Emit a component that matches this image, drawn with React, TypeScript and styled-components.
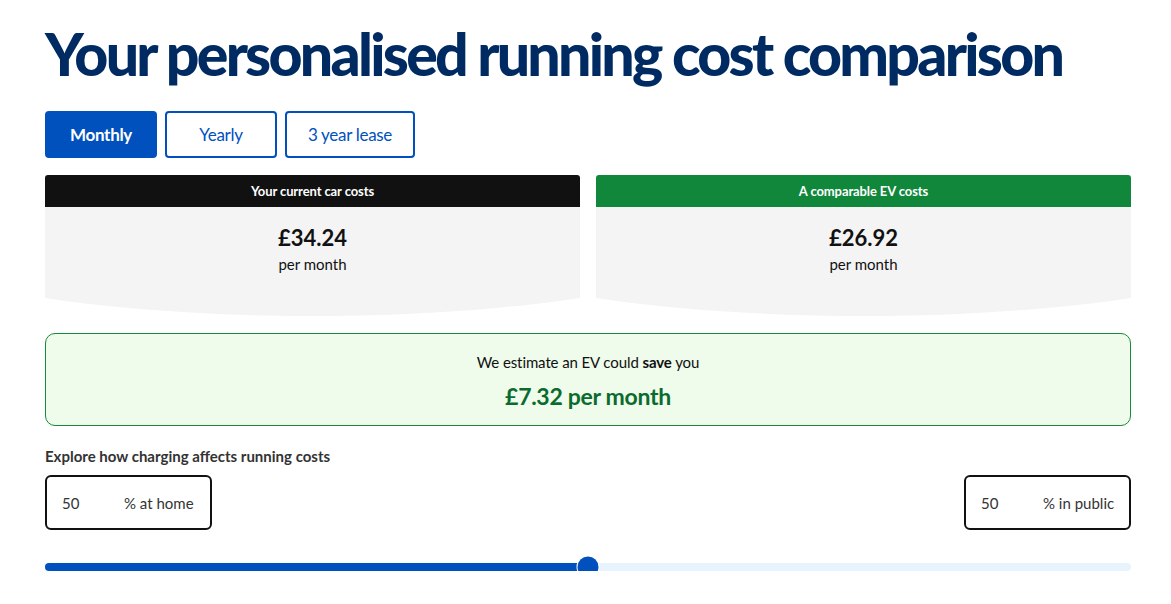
import { useState } from "react";
import styled, { createGlobalStyle } from "styled-components";

const GlobalStyle = createGlobalStyle`
  body {
    margin: 0;
    background: #fff;
    font-family: Lato, "Open Sans", sans-serif;
    color: #111;
  }
`;

const Page = styled.main`
  width: 1086px;
  padding: 18px 0 0 45px;
`;

const Title = styled.h1`
  margin: 0;
  font-size: 59px;
  font-weight: 900;
  line-height: 72px;
  letter-spacing: -2.75px;
  color: #002b62;
  white-space: nowrap;
`;

const PeriodTabs = styled.div`
  display: flex;
  gap: 8px;
  margin-top: 21px;
`;

const PeriodButton = styled.button<{ $active?: boolean; $width: number }>`
  width: ${(p) => p.$width}px;
  height: 47px;
  border: 2px solid #0050bd;
  border-radius: 4px;
  background: ${(p) => (p.$active ? "#0050bd" : "#fff")};
  color: ${(p) => (p.$active ? "#fff" : "#0050bd")};
  font-family: Lato, sans-serif;
  font-size: 17px;
  font-weight: ${(p) => (p.$active ? 700 : 400)};
  letter-spacing: -0.3px;
  cursor: pointer;
`;

const CostGrid = styled.div`
  display: grid;
  grid-template-columns: 1fr 1fr;
  gap: 16px;
  margin-top: 17px;
`;

const CostCard = styled.section``;

const CardHeader = styled.div<{ $tone: "dark" | "green" }>`
  height: 32px;
  display: flex;
  align-items: center;
  justify-content: center;
  border-radius: 3px 3px 0 0;
  background: ${(p) => (p.$tone === "green" ? "#10873b" : "#111")};
  color: #fff;
  font-size: 13px;
  font-weight: 700;
  letter-spacing: -0.1px;
`;

// bottom edge bows outward in a shallow arc
const CardBody = styled.div`
  height: 109px;
  padding-top: 16px;
  box-sizing: border-box;
  background: #f4f4f4;
  text-align: center;
  clip-path: ellipse(486px 109px at 50% 0);
`;

const Price = styled.div`
  font-size: 22px;
  font-weight: 700;
  line-height: 30px;
`;

const PriceUnit = styled.div`
  font-size: 15px;
  line-height: 22px;
`;

const SavingsBox = styled.div`
  margin-top: 17px;
  height: 93px;
  box-sizing: border-box;
  padding-top: 17px;
  border: 1px solid #188a3c;
  border-radius: 10px;
  background: #effbeb;
  text-align: center;
`;

const SavingsLead = styled.p`
  margin: 0;
  font-size: 15px;
  line-height: 22px;
  letter-spacing: -0.1px;

  strong {
    font-weight: 700;
  }
`;

const SavingsAmount = styled.p`
  margin: 8px 0 0;
  font-size: 23px;
  font-weight: 700;
  line-height: 30px;
  letter-spacing: -0.3px;
  color: #0b6b2e;
`;

const ExploreLabel = styled.p`
  margin: 20px 0 0;
  font-size: 15px;
  font-weight: 700;
  line-height: 20px;
  color: #333;
`;

const SplitRow = styled.div`
  display: flex;
  justify-content: space-between;
  margin-top: 9px;
`;

const SplitInput = styled.label`
  width: 167px;
  height: 55px;
  box-sizing: border-box;
  display: flex;
  align-items: center;
  padding-left: 15px;
  border: 2px solid #111;
  border-radius: 6px;
  font-size: 15px;
  color: #333;
`;

const SplitValue = styled.span`
  width: 62px;
`;

const Slider = styled.div`
  position: relative;
  margin-top: 33px;
  height: 8px;
  border-radius: 4px;
  background: #e8f4fd;
`;

const SliderFill = styled.div`
  height: 100%;
  border-radius: 4px;
  background: #0050bd;
`;

const SliderThumb = styled.div`
  position: absolute;
  top: 50%;
  width: 21px;
  height: 21px;
  border-radius: 50%;
  background: #0050bd;
  box-shadow: 0 0 0 1px #fff;
  transform: translate(-50%, -50%);
`;

const periods = [
  { label: "Monthly", width: 112 },
  { label: "Yearly", width: 112 },
  { label: "3 year lease", width: 130 },
];

export default function App() {
  const [period, setPeriod] = useState("Monthly");
  const home = 50;

  return (
    <Page>
      <GlobalStyle />
      <Title>Your personalised running cost comparison</Title>

      <PeriodTabs>
        {periods.map((p) => (
          <PeriodButton
            key={p.label}
            $width={p.width}
            $active={period === p.label}
            onClick={() => setPeriod(p.label)}
          >
            {p.label}
          </PeriodButton>
        ))}
      </PeriodTabs>

      <CostGrid>
        <CostCard>
          <CardHeader $tone="dark">Your current car costs</CardHeader>
          <CardBody>
            <Price>£34.24</Price>
            <PriceUnit>per month</PriceUnit>
          </CardBody>
        </CostCard>
        <CostCard>
          <CardHeader $tone="green">A comparable EV costs</CardHeader>
          <CardBody>
            <Price>£26.92</Price>
            <PriceUnit>per month</PriceUnit>
          </CardBody>
        </CostCard>
      </CostGrid>

      <SavingsBox>
        <SavingsLead>
          We estimate an EV could <strong>save</strong> you
        </SavingsLead>
        <SavingsAmount>£7.32 per month</SavingsAmount>
      </SavingsBox>

      <ExploreLabel>Explore how charging affects running costs</ExploreLabel>
      <SplitRow>
        <SplitInput>
          <SplitValue>{home}</SplitValue>% at home
        </SplitInput>
        <SplitInput>
          <SplitValue>{100 - home}</SplitValue>% in public
        </SplitInput>
      </SplitRow>

      <Slider>
        <SliderFill style={{ width: `${home}%` }} />
        <SliderThumb style={{ left: `${home}%` }} />
      </Slider>
    </Page>
  );
}
